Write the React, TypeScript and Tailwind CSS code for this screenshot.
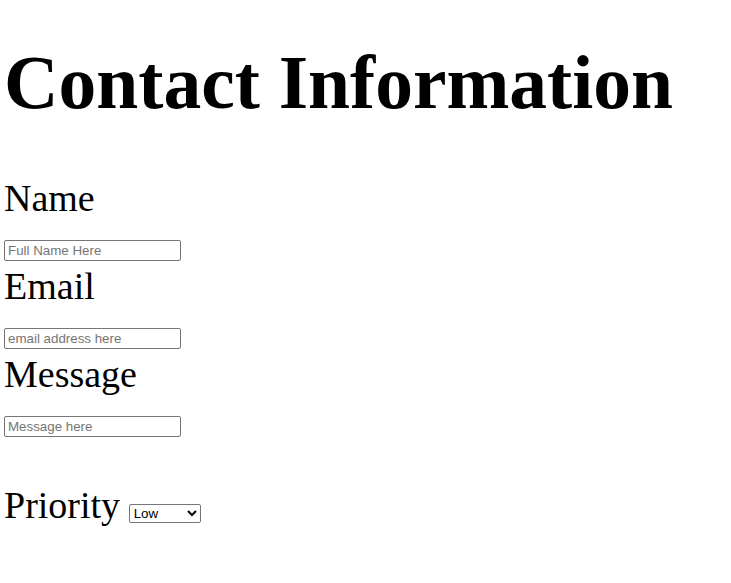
export default function App() {
  const inputCls =
    "block w-[177px] h-[21px] mt-[20px] mb-[3px] border border-[#767676] rounded-[2px] px-[3px] py-[1px] text-[13.33px] leading-[15px] text-black bg-white placeholder:text-[#757575] [font-family:'Liberation_Sans',Arial,sans-serif]";
  const labelCls = "block text-[38px] leading-[44px]";
  return (
    <div className="min-h-[583px] bg-white text-black pl-[4px] [font-family:'Liberation_Serif','Times_New_Roman',serif]">
      <h1 className="pt-[40px] text-[75.5px] leading-[86px] font-bold">Contact Information</h1>
      <form className="mt-[50px]">
        <label className={labelCls}>Name</label>
        <input type="text" placeholder="Full Name Here" className={inputCls} />
        <label className={labelCls}>Email</label>
        <input type="text" placeholder="email address here" className={inputCls} />
        <label className={labelCls}>Message</label>
        <input type="text" placeholder="Message here" className={inputCls} />
        <div className="mt-[46px] text-[38px] leading-[44px]">
          <span>Priority</span>{" "}
          <select
            defaultValue="Low"
            className="-ml-[1px] w-[72px] h-[19px] border border-[#767676] rounded-[2px] bg-white text-[13.33px] align-baseline [font-family:'Liberation_Sans',Arial,sans-serif]"
          >
            <option>Low</option>
            <option>Medium</option>
            <option>High</option>
          </select>
        </div>
      </form>
    </div>
  );
}
